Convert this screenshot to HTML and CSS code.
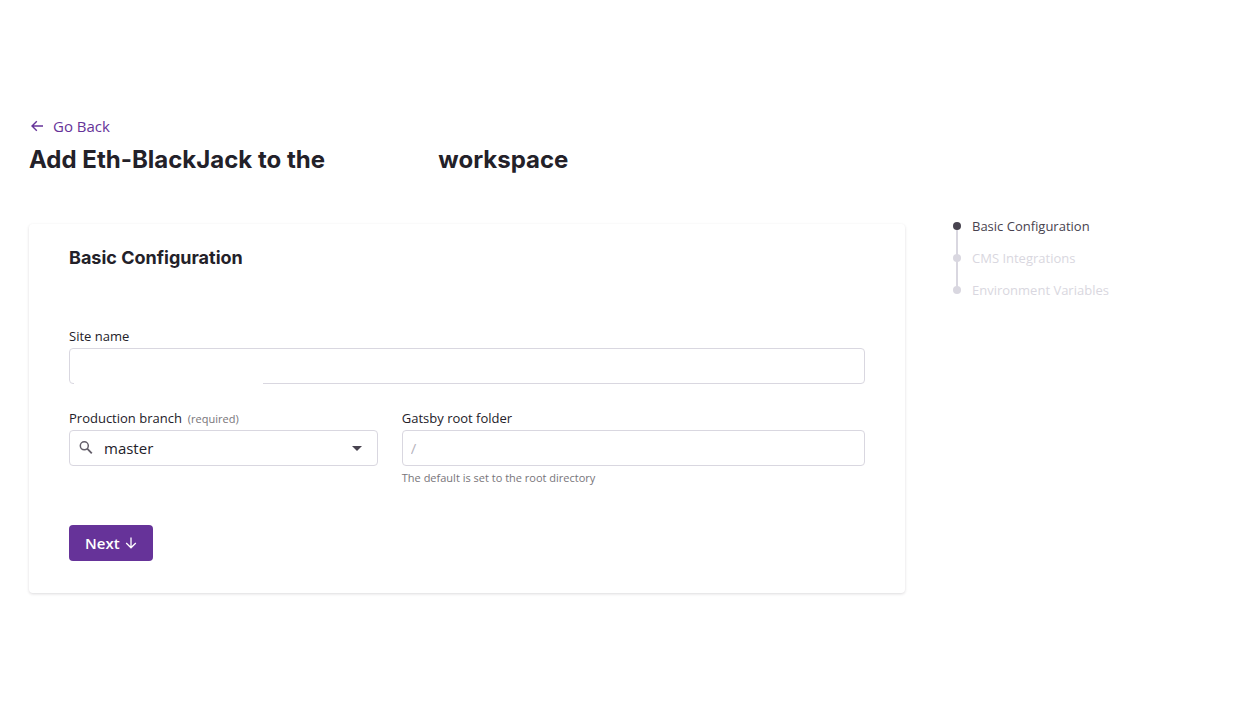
FILE: index.html
```html
<!DOCTYPE html>
<html lang="en">
<head>
<meta charset="utf-8">
<meta name="viewport" content="width=device-width, initial-scale=1">
<title>Add Eth-BlackJack</title>
<link rel="stylesheet" href="styles.css">
</head>
<body>
<div class="page">
  <header class="page-header">
    <a class="back-link" href="#">
      <svg class="back-icon" viewBox="0 0 16 16" width="16" height="16" aria-hidden="true"><path d="M14 8H3.200M7.800 3.200 3 8l4.800 4.800" fill="none" stroke="currentColor" stroke-width="1.400"/></svg>
      Go Back
    </a>
    <h1 class="page-title">Add Eth-BlackJack to the <span class="workspace-name"></span> workspace</h1>
  </header>
  <div class="layout">
    <main class="card">
      <h2 class="card-title">Basic Configuration</h2>
      <form class="form">
        <div class="field">
          <label class="label" for="site-name">Site name</label>
          <div class="control control-redacted">
            <input class="input" id="site-name" type="text">
          </div>
        </div>
        <div class="field-row">
          <div class="field">
            <label class="label" for="branch">Production branch <span class="required">(required)</span></label>
            <div class="control">
              <svg class="search-icon" viewBox="0 0 16 16" width="16" height="16" aria-hidden="true"><circle cx="6.300" cy="5.800" r="4" fill="none" stroke="currentColor" stroke-width="1.500"/><path d="m9.200 8.700 4.600 4.600" fill="none" stroke="currentColor" stroke-width="1.800"/></svg>
              <select class="input select" id="branch"><option>master</option></select>
              <svg class="caret-icon" viewBox="0 0 10 5" width="10" height="5" aria-hidden="true"><path d="M0 0h10L5 5z" fill="currentColor"/></svg>
            </div>
          </div>
          <div class="field">
            <label class="label" for="root-folder">Gatsby root folder</label>
            <div class="control">
              <input class="input" id="root-folder" type="text" placeholder="/" aria-describedby="root-hint">
            </div>
            <p class="hint" id="root-hint">The default is set to the root directory</p>
          </div>
        </div>
        <button class="next-button" type="button">Next
          <svg viewBox="0 0 12 12" width="12" height="12" aria-hidden="true"><path d="M6 .5v10M1.200 6 6 10.800 10.800 6" fill="none" stroke="currentColor" stroke-width="1.300"/></svg>
        </button>
      </form>
    </main>
    <nav class="steps-nav" aria-label="Setup steps">
      <ol class="steps">
        <li class="step step-current" aria-current="step">Basic Configuration</li>
        <li class="step">CMS Integrations</li>
        <li class="step">Environment Variables</li>
      </ol>
    </nav>
  </div>
</div>
</body>
</html>
```
FILE: styles.css
```css
*, *::before, *::after { box-sizing: border-box; }

body {
  margin: 0;
  background: #fff;
  color: #232129;
  font-family: "Segoe UI", "Open Sans", "Noto Sans", sans-serif;
  font-size: 14px;
  line-height: 20px;
}

.page {
  max-width: 1248px;
  margin: 0 auto;
  padding: 116px 24px 48px;
}

.page-header { margin-bottom: 48px; }

.back-link {
  display: flex;
  align-items: center;
  gap: 8px;
  width: fit-content;
  color: #663399;
  font-size: 15px;
  text-decoration: none;
}

.page-title {
  margin: 8px 0 0;
  font-family: Inter, sans-serif;
  font-size: 24px;
  font-weight: 700;
  line-height: 32px;
}

.workspace-name {
  display: inline-block;
  width: 102px;
}

.layout {
  display: grid;
  grid-template-columns: minmax(0, 1fr) 276px;
  gap: 48px;
  align-items: start;
}

.card {
  padding: 20px 40px 32px;
  border-radius: 4px;
  background: #fff;
  box-shadow: 0 1px 3px rgba(35, 33, 41, 0.16);
}

.card-title {
  margin: 0;
  font-family: Inter, sans-serif;
  font-size: 18px;
  font-weight: 700;
  line-height: 28px;
}

.form {
  display: flex;
  flex-direction: column;
  gap: 24px;
  margin-top: 54px;
}

.label {
  display: flex;
  align-items: baseline;
  gap: 6px;
  height: 20px;
  margin-bottom: 2px;
  font-size: 13px;
}

.required {
  color: #78757a;
  font-size: 11px;
}

.control { position: relative; }

.input {
  display: block;
  width: 100%;
  height: 36px;
  padding: 0 8px;
  border: 1px solid #d9d7e0;
  border-radius: 4px;
  background: #fff;
  color: #232129;
  font: inherit;
  font-size: 15px;
}

.input::placeholder { color: #b7b5bd; opacity: 1; }

.control-redacted::after {
  content: "";
  position: absolute;
  bottom: 0;
  left: 5px;
  width: 189px;
  height: 24px;
  background: #fff;
}

.field-row {
  display: grid;
  grid-template-columns: 2fr 3fr;
  gap: 24px;
}

.select {
  padding: 0 34px;
  appearance: none;
}

.search-icon {
  position: absolute;
  top: 10px;
  left: 9px;
  color: #635e69;
}

.caret-icon {
  position: absolute;
  top: 16px;
  right: 16px;
  color: #48434f;
}

.hint {
  margin: 2px 0 0;
  color: #78757a;
  font-size: 11px;
}

.next-button {
  display: inline-flex;
  align-items: center;
  align-self: flex-start;
  gap: 5px;
  height: 36px;
  margin-top: 13px;
  padding: 0 16px;
  border: 0;
  border-radius: 4px;
  background: #663399;
  color: #fff;
  font: inherit;
  font-size: 15px;
  font-weight: 600;
}

.steps-nav { margin-top: -8px; }

.steps {
  display: flex;
  flex-direction: column;
  gap: 12px;
  margin: 0;
  padding: 0;
  list-style: none;
}

.step {
  position: relative;
  padding-left: 19px;
  color: #d9d7e0;
  font-size: 13px;
}

.step::before {
  content: "";
  position: absolute;
  top: 6px;
  left: 0;
  z-index: 1;
  width: 8px;
  height: 8px;
  border-radius: 50%;
  background: #d9d7e0;
}

.step:not(:last-child)::after {
  content: "";
  position: absolute;
  top: 10px;
  left: 3px;
  width: 2px;
  height: 32px;
  background: #d9d7e0;
}

.step-current { color: #48434f; }
.step-current::before { background: #48434f; }
```
